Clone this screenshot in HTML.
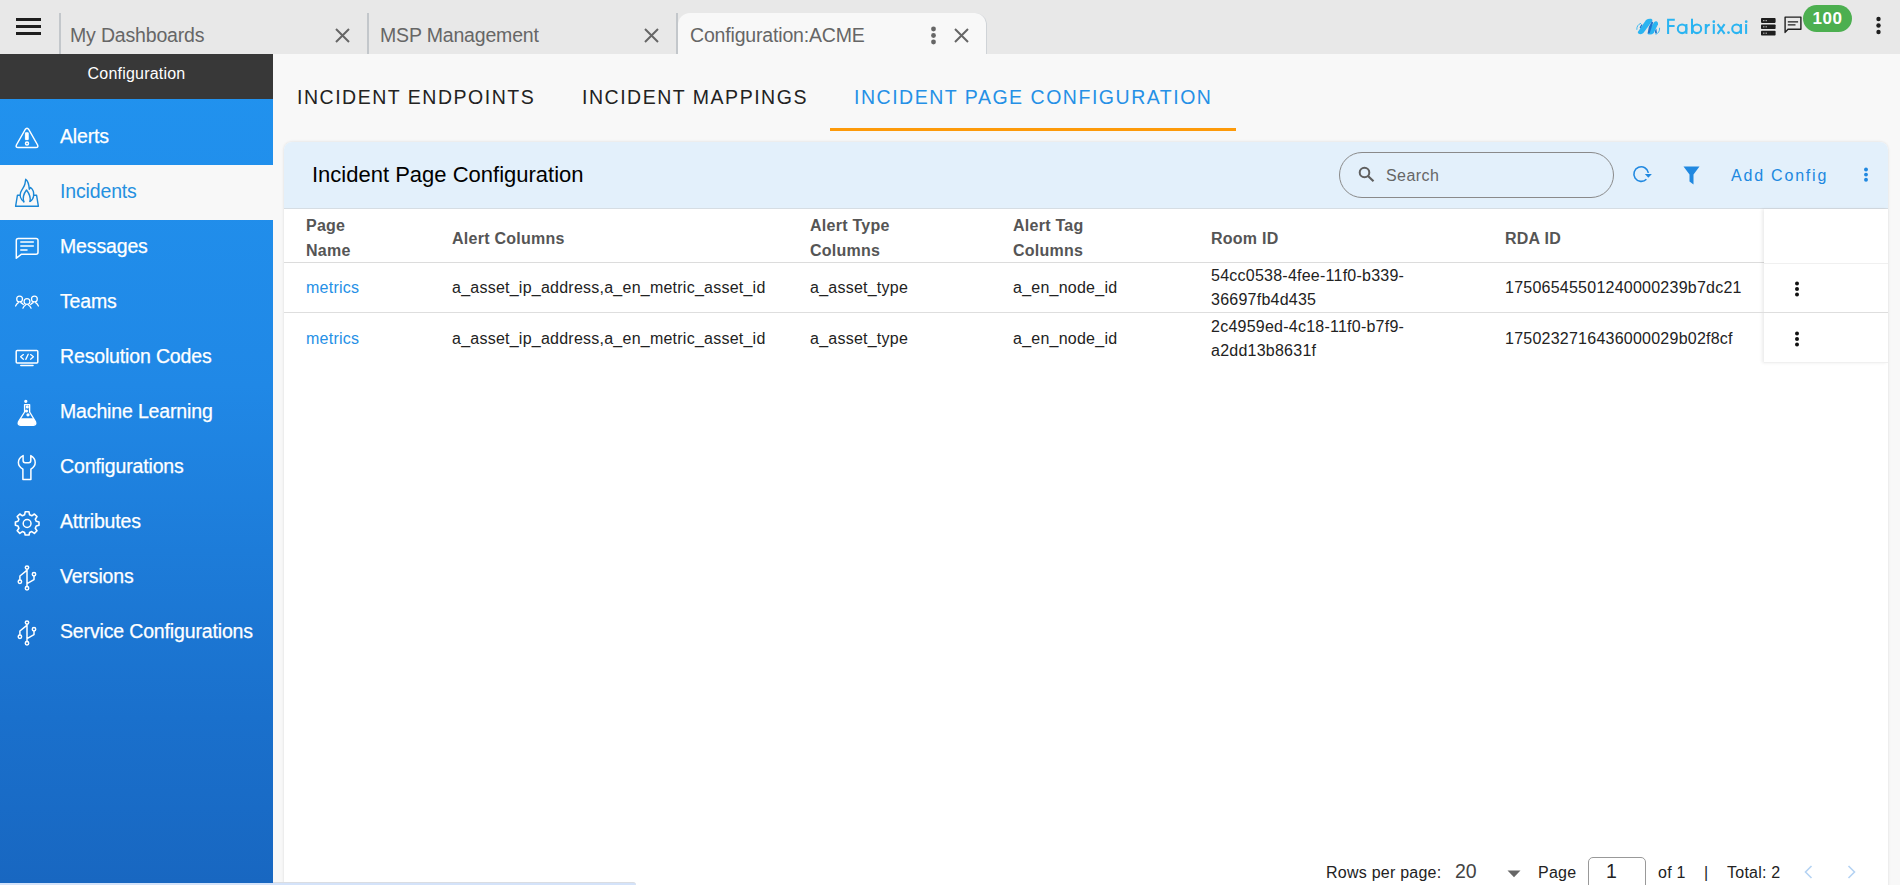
<!DOCTYPE html>
<html><head><meta charset="utf-8">
<style>
*{box-sizing:border-box}
html,body{margin:0;padding:0}
body{width:1900px;height:885px;overflow:hidden;position:relative;background:#f8f8f8;font-family:"Liberation Sans",sans-serif;color:#222}
.a{position:absolute;white-space:nowrap}
#top{position:absolute;left:0;top:0;width:1900px;height:54px;background:#e8e8e8}
.hb{position:absolute;left:16px;width:25px;height:3px;background:#1e1e1e}
.sep{position:absolute;top:13px;width:2px;height:41px;background:#c3c7cb}
.tabt{position:absolute;top:25.6px;font-size:19.5px;line-height:19.5px;color:#666;letter-spacing:-0.17px}
#side{position:absolute;left:0;top:54px;width:273px;height:829px;z-index:5;background:linear-gradient(180deg,#2193ef 0%,#2088e6 40%,#1a70cc 80%,#1867c1 100%)}
#sidehead{position:absolute;left:0;top:0;width:273px;height:45px;background:#383838;color:#fff;font-size:16px;text-align:center;line-height:16px;padding-top:12px;letter-spacing:0.2px}
.item{position:absolute;left:0;width:273px;height:55px;color:#fff;font-size:19.5px}
.item .t{position:absolute;left:60px;top:16.6px;line-height:19.5px;letter-spacing:-0.15px;-webkit-text-stroke:0.25px #fff}
.item.sel .t{-webkit-text-stroke:0}
.item svg{position:absolute;left:13px;top:12px}
.item.sel{background:#f8f8f8;color:#2590e0}
#tabs .mt{position:absolute;top:87.5px;font-size:19.5px;line-height:19.5px;letter-spacing:1.52px;color:#222}
#card{position:absolute;left:284px;top:142px;width:1604px;height:760px;background:#fff;border-radius:8px 8px 0 0;box-shadow:0 0 3px rgba(0,0,0,0.12)}
#chead{position:absolute;left:0;top:0;width:1604px;height:67px;background:#e3f0fb;border-radius:8px 8px 0 0;border-bottom:1px solid #d6dde3}
.th{position:absolute;font-size:16px;font-weight:bold;color:#555;line-height:25px;letter-spacing:0.25px}
.td{position:absolute;font-size:16px;color:#222;line-height:16px;letter-spacing:0.24px}
.lnk{color:#2590e6}
.hl{position:absolute;height:1px;background:#dedede}
</style></head>
<body>
<div id="top">
  <div class="hb" style="top:18px"></div>
  <div class="hb" style="top:25px"></div>
  <div class="hb" style="top:32px"></div>
  <div class="sep" style="left:59px"></div>
  <div class="tabt" style="left:70px">My Dashboards</div>
  <svg class="a" style="left:335px;top:28px" width="15" height="15" viewBox="0 0 15 15"><path d="M1 1L14 14M14 1L1 14" stroke="#666" stroke-width="2"/></svg>
  <div class="sep" style="left:367px"></div>
  <div class="tabt" style="left:380px">MSP Management</div>
  <svg class="a" style="left:644px;top:28px" width="15" height="15" viewBox="0 0 15 15"><path d="M1 1L14 14M14 1L1 14" stroke="#666" stroke-width="2"/></svg>
  <div class="sep" style="left:676px"></div>
  <div class="a" style="left:678px;top:13px;width:309px;height:41px;background:#f8f8f8;border-radius:12px 12px 0 0;border-right:1px solid #cfd3d7"></div>
  <div class="tabt" style="left:690px">Configuration:ACME</div>
  <svg class="a" style="left:930px;top:26px" width="7" height="19" viewBox="0 0 7 19"><circle cx="3.5" cy="3" r="2.4" fill="#666"/><circle cx="3.5" cy="9.5" r="2.4" fill="#666"/><circle cx="3.5" cy="16" r="2.4" fill="#666"/></svg>
  <svg class="a" style="left:954px;top:28px" width="15" height="15" viewBox="0 0 15 15"><path d="M1 1L14 14M14 1L1 14" stroke="#666" stroke-width="2"/></svg>
  <!-- logo -->
  <svg class="a" style="left:1630px;top:14px" width="125" height="26" viewBox="1630 14 125 26">
    <g fill="#2ab4f1">
      <path d="M1637.8 32 L1646 19.9 Q1648.2 18.4 1651.2 18.8 Q1652.6 19.4 1652.4 20.8 L1643.4 33 Q1641.8 34.6 1639.4 34 Q1637.4 33.4 1637.8 32 Z"/>
      <path d="M1647.6 33.2 L1654 22.2 Q1655.4 20.8 1657 21.4 Q1658.4 22.4 1658 24.2 L1653.8 33 Q1652 34.8 1649.6 34.6 Q1647.4 34.4 1647.6 33.2 Z"/>
    </g>
    <g fill="#1f74cc">
      <path d="M1651.8 21.2 L1653.2 22.6 L1649.8 33 L1647.6 33.4 L1648.8 27 Z"/>
      <path d="M1639.6 27.4 L1641.4 24.2 L1642.4 24.8 L1640.6 28.6 Z"/>
      <path d="M1655 30.6 L1656.4 28.6 L1657 33.2 L1655.2 33.6 Z"/>
    </g>
    <g fill="none" stroke="#2ab4f1" stroke-width="0.9" stroke-linecap="round">
      <path d="M1636.8 29.4 Q1636.6 25 1640.6 23.4"/>
      <path d="M1656 34.2 Q1659.8 33 1659.6 28.2"/>
    </g>
    <g fill="none" stroke="#2ab4f1" stroke-width="2.05">
      <path d="M1668.1 33.9 V19.75 H1674.8 M1668.1 26.05 H1674.6"/>
      <circle cx="1682.1" cy="28.8" r="4.3"/>
      <path d="M1686.4 24 V33.9"/>
      <path d="M1692 18.7 V33.9"/>
      <circle cx="1696.9" cy="28.8" r="4.3"/>
      <path d="M1705.8 24.1 V33.9 M1705.8 28.6 Q1706.6 25 1709.8 24.8"/>
      <path d="M1713.8 24.1 V33.9"/>
      <path d="M1717.6 24.1 L1724.6 33.9 M1724.6 24.1 L1717.6 33.9"/>
      <circle cx="1736.5" cy="28.8" r="4.3"/>
      <path d="M1741 24 V33.9"/>
      <path d="M1746.1 24.1 V33.9"/>
    </g>
    <g fill="#2ab4f1">
      <circle cx="1713.8" cy="21.7" r="1.35"/>
      <circle cx="1728.5" cy="32.6" r="1.35"/>
      <circle cx="1746.2" cy="21.7" r="1.35"/>
    </g>
  </svg>
  <!-- server icon -->
  <svg class="a" style="left:1755px;top:14px" width="50" height="24" viewBox="1755 14 50 24">
    <g fill="#1e1e1e">
      <rect x="1761" y="18.1" width="14.6" height="4.8" rx="0.8"/>
      <rect x="1761" y="24.4" width="14.6" height="4.7" rx="0.8"/>
      <rect x="1761" y="30.8" width="14.6" height="4.7" rx="0.8"/>
    </g>
    <g fill="#c8c8c8">
      <rect x="1763.2" y="20" width="1.2" height="1.2"/><rect x="1765.6" y="20" width="1.2" height="1.2"/>
      <rect x="1763.2" y="26.2" width="1.2" height="1.2"/><rect x="1765.6" y="26.2" width="1.2" height="1.2"/>
      <rect x="1763.2" y="32.6" width="1.2" height="1.2"/><rect x="1765.6" y="32.6" width="1.2" height="1.2"/>
    </g>
    <path d="M1785.1 17.1 H1800.9 V29.2 H1788 L1785.1 32.4 Z" fill="none" stroke="#1e1e1e" stroke-width="1.4" stroke-linejoin="round"/>
    <path d="M1787.8 21.8 H1798.1 M1787.8 24.9 H1795.5" stroke="#1e1e1e" stroke-width="1.3"/>
  </svg>
  <div class="a" style="left:1803px;top:5px;width:49px;height:27px;border-radius:14px;background:#4caf50;color:#fff;font-size:17px;line-height:27px;text-align:center;font-weight:bold;letter-spacing:0.5px">100</div>
  <svg class="a" style="left:1875px;top:16px" width="7" height="19" viewBox="0 0 7 19"><circle cx="3.5" cy="3" r="2.2" fill="#1e1e1e"/><circle cx="3.5" cy="9.5" r="2.2" fill="#1e1e1e"/><circle cx="3.5" cy="16" r="2.2" fill="#1e1e1e"/></svg>
</div>

<div id="side">
  <div id="sidehead">Configuration</div>
  <div class="item" style="top:56px"><span class="t">Alerts</span></div>
  <div class="item sel" style="top:111px"><span class="t">Incidents</span></div>
  <div class="item" style="top:166px"><span class="t">Messages</span></div>
  <div class="item" style="top:221px"><span class="t">Teams</span></div>
  <div class="item" style="top:276px"><span class="t">Resolution Codes</span></div>
  <div class="item" style="top:331px"><span class="t">Machine Learning</span></div>
  <div class="item" style="top:386px"><span class="t">Configurations</span></div>
  <div class="item" style="top:441px"><span class="t">Attributes</span></div>
  <div class="item" style="top:496px"><span class="t">Versions</span></div>
  <div class="item" style="top:551px"><span class="t">Service Configurations</span></div>
</div>


<svg class="a" style="left:0;top:0;z-index:6" width="273" height="885" viewBox="0 0 273 885" fill="none" stroke="#fff" stroke-width="1.5" stroke-linecap="round" stroke-linejoin="round">
  <!-- alerts -->
  <path d="M25.2 129.5 Q27 126.8 28.8 129.5 L37.6 145 Q38.6 147.6 36 147.6 H18 Q15.4 147.6 16.4 145 Z"/>
  <path d="M25.8 132.8 H28.2 V139.6 H25.8 Z" fill="#fff" stroke-width="1"/>
  <circle cx="27" cy="143.6" r="1.5"/>
  <!-- incidents -->
  <g stroke="#1a87d6" stroke-width="1.4">
    <path d="M19.6 195.3 H17.4 L15.6 206.3 H38.4 L36.6 195.3 H34.2"/>
    <path d="M23.8 201.8 C20.5 199.5 19.6 195.5 20.6 192.5 C21.8 189 24.3 187 24.9 184 C25.3 182 25.5 180.5 25.7 179.3 C28.2 181 29 184.5 29.3 189.3 C29.8 188.2 30.6 187.5 30.6 187.5 C33.2 189.5 34 193 33.6 196 C33.2 199 31.6 200.6 30 201.4"/>
    <path d="M23.8 201.8 C22.6 198 23.8 193.5 26.5 190 C29.2 193.5 30.8 197.5 30 201.4"/>
  </g>
  <!-- messages -->
  <path d="M18.2 238.4 H36 Q38 238.4 38 240.4 V252.2 Q38 254.2 36 254.2 H21.5 L16.3 258.2 V240.4 Q16.3 238.4 18.2 238.4 Z"/>
  <path d="M20.8 242 H33.3 M20.8 246 H33.3 M20.8 250 H27"/>
  <!-- teams -->
  <g stroke-width="1.25">
  <circle cx="19.6" cy="299" r="2.9"/>
  <circle cx="27" cy="301.5" r="2.9"/>
  <circle cx="34.4" cy="299" r="2.9"/>
  <path d="M15.6 306 Q16.6 303.6 18.4 302.6 M20.8 302.6 Q22.2 303.2 23.4 304.6"/>
  <path d="M22.9 308.2 Q23.8 306 25.6 305 M28.4 305 Q30.2 306 31.1 308.2"/>
  <path d="M30.6 304.6 Q31.8 303.2 33.2 302.6 M35.6 302.6 Q37.4 303.6 38.4 306"/>
  </g>
  <!-- resolution codes -->
  <rect x="16.2" y="350.6" width="21.6" height="12.4" rx="1"/>
  <path d="M20.8 365.6 H33"/>
  <path d="M23.4 354.6 L20.6 356.8 L23.4 359.2 M30.6 354.6 L33.4 356.8 L30.6 359.2 M28.2 354.3 L25.8 359.4" stroke-width="1.3"/>
  <!-- ML -->
  <path d="M24.6 404.6 H29.6 V412 L35.4 421.5 Q36.8 425.2 33.5 425.2 H20.6 Q17.2 425.2 18.6 421.5 L24.6 412 Z" stroke-width="1.4"/>
  <path d="M20.4 418.2 H33.6 L35.6 421.8 Q36.6 425 33.5 425 H20.6 Q17.4 425 18.4 421.8 Z" fill="#fff" stroke="none"/>
  <circle cx="25.8" cy="401.3" r="0.9" fill="#fff"/>
  <circle cx="27.3" cy="406.9" r="0.8" fill="#fff"/>
  <circle cx="26.5" cy="411" r="0.8" fill="#fff"/>
  <circle cx="28" cy="414.8" r="0.9" fill="#fff"/>
  <!-- configurations wrench -->
  <path d="M23.1 455.6 Q18.4 458 18.4 462.5 Q18.4 466.6 22.9 469.2 V479.6 H30.9 V469.2 Q35.2 466.6 35.2 462.5 Q35.2 458 30.8 455.6 V460.6 Q30.8 462.8 28.8 462.8 H25.1 Q23.1 462.8 23.1 460.6 Z"/>
  <!-- attributes gear -->
  <path d="M25.2 511.8 H29 L29.6 514.8 L31.8 515.8 L34.4 514 L37 516.6 L35.3 519.2 L36.2 521.3 L39 522 V525.3 L36.2 526 L35.3 528.2 L37 530.8 L34.4 533.4 L31.8 531.6 L29.6 532.6 L29 535 H25.2 L24.6 532.6 L22.4 531.6 L19.8 533.4 L17.2 530.8 L18.9 528.2 L18 526 L15.4 525.3 V522 L18 521.3 L18.9 519.2 L17.2 516.6 L19.8 514 L22.4 515.8 L24.6 514.8 Z" stroke-width="1.6"/>
  <circle cx="27.1" cy="523.5" r="3.9"/>
  <!-- versions -->
  <g id="ver">
  <circle cx="27" cy="567.6" r="1.7"/>
  <circle cx="27" cy="588.2" r="1.7"/>
  <circle cx="19.9" cy="581.8" r="1.7"/>
  <circle cx="34" cy="574.2" r="1.7"/>
  <path d="M27 569.3 V586.5 M26.2 570.8 L19.9 576 V580.1 M27 583.6 L34 579.6 V575.9"/>
  </g>
  <use href="#ver" y="55"/>
</svg>

<div id="tabs">
  <div class="mt" style="left:297px">INCIDENT ENDPOINTS</div>
  <div class="mt" style="left:582px">INCIDENT MAPPINGS</div>
  <div class="mt" style="left:854px;color:#2590e6">INCIDENT PAGE CONFIGURATION</div>
  <div class="a" style="left:830px;top:128px;width:406px;height:3px;background:#fd9a0a"></div>
</div>

<div id="card">
  <div id="chead">
    <div class="a" style="left:28px;top:22px;font-size:22px;line-height:22px;color:#000">Incident Page Configuration</div>
    <div class="a" style="left:1055px;top:10px;width:275px;height:46px;border:1px solid #8a8a8a;border-radius:23px"></div>
    <svg class="a" style="left:1074px;top:24px" width="17" height="16" viewBox="0 0 17 16"><circle cx="6.5" cy="6.5" r="4.8" fill="none" stroke="#5f5f5f" stroke-width="2"/><path d="M10 10L15.5 15.2" stroke="#5f5f5f" stroke-width="2.2"/></svg>
    <div class="a" style="left:1102px;top:26px;font-size:16px;line-height:16px;color:#666;letter-spacing:0.45px">Search</div>
    <svg class="a" style="left:1340px;top:22px" width="30" height="24" viewBox="1624 164 30 24"><path d="M1646.4 179.2 A7.3 7.3 0 1 1 1648.4 172.9" fill="none" stroke="#2088e0" stroke-width="1.6"/><path d="M1644.8 174.1 H1651.9 L1648.3 177.7 Z" fill="#2088e0"/></svg>
    <svg class="a" style="left:1399px;top:24px" width="17" height="19" viewBox="0 0 17 19"><path d="M0.5 0.5H16.5L10.5 8.5V18.5L6.5 15.5V8.5Z" fill="#2088e0"/></svg>
    <div class="a" style="left:1447px;top:26px;font-size:16px;line-height:16px;color:#2088e0;letter-spacing:1.8px">Add Config</div>
    <svg class="a" style="left:1579px;top:25px" width="6" height="16" viewBox="0 0 6 16"><circle cx="3" cy="2.5" r="1.95" fill="#2088e0"/><circle cx="3" cy="7.6" r="1.95" fill="#2088e0"/><circle cx="3" cy="12.7" r="1.95" fill="#2088e0"/></svg>
  </div>
  <!-- table -->
  <div class="th" style="left:22px;top:71px">Page<br>Name</div>
  <div class="th" style="left:168px;top:84px">Alert Columns</div>
  <div class="th" style="left:526px;top:71px">Alert Type<br>Columns</div>
  <div class="th" style="left:729px;top:71px">Alert Tag<br>Columns</div>
  <div class="th" style="left:927px;top:84px">Room ID</div>
  <div class="th" style="left:1221px;top:84px">RDA ID</div>
  <div class="hl" style="left:0;top:120px;width:1480px;background:#dcdcdc"></div>
  <div class="a" style="left:1480px;top:67px;width:124px;height:154px;box-shadow:-2px 0 3px rgba(0,0,0,0.08);background:#fff"></div>
  <div class="hl" style="left:1480px;top:121px;width:124px;background:#f0f0f0"></div>
  <div class="hl" style="left:0;top:170px;width:1604px"></div>
  <div class="hl" style="left:1480px;top:220px;width:124px;background:#f0f0f0"></div>

  <div class="td lnk" style="left:22px;top:138px">metrics</div>
  <div class="td" style="left:168px;top:138px">a_asset_ip_address,a_en_metric_asset_id</div>
  <div class="td" style="left:526px;top:138px">a_asset_type</div>
  <div class="td" style="left:729px;top:138px">a_en_node_id</div>
  <div class="td" style="left:927px;top:122px;line-height:24px;white-space:normal">54cc0538-4fee-11f0-b339-<br>36697fb4d435</div>
  <div class="td" style="left:1221px;top:138px">17506545501240000239b7dc21</div>
  <svg class="a" style="left:1510px;top:139px" width="6" height="16" viewBox="0 0 6 16"><circle cx="3" cy="2.5" r="2" fill="#111"/><circle cx="3" cy="8" r="2" fill="#111"/><circle cx="3" cy="13.5" r="2" fill="#111"/></svg>

  <div class="td lnk" style="left:22px;top:189px">metrics</div>
  <div class="td" style="left:168px;top:189px">a_asset_ip_address,a_en_metric_asset_id</div>
  <div class="td" style="left:526px;top:189px">a_asset_type</div>
  <div class="td" style="left:729px;top:189px">a_en_node_id</div>
  <div class="td" style="left:927px;top:172.6px;line-height:24px;white-space:normal">2c4959ed-4c18-11f0-b7f9-<br>a2dd13b8631f</div>
  <div class="td" style="left:1221px;top:189px">1750232716436000029b02f8cf</div>
  <svg class="a" style="left:1510px;top:189px" width="6" height="16" viewBox="0 0 6 16"><circle cx="3" cy="2.5" r="2" fill="#111"/><circle cx="3" cy="8" r="2" fill="#111"/><circle cx="3" cy="13.5" r="2" fill="#111"/></svg>

  <!-- pagination -->
  <div class="a" style="left:1042px;top:723px;font-size:16px;line-height:16px;color:#222;letter-spacing:0.24px">Rows per page:</div>
  <div class="a" style="left:1171px;top:719.6px;font-size:19.5px;line-height:19.5px;color:#444">20</div>
  <svg class="a" style="left:1223px;top:728px" width="14" height="8" viewBox="0 0 14 8"><path d="M0.5 0.5H13.5L7 7.2Z" fill="#666"/></svg>
  <div class="a" style="left:1254px;top:723px;font-size:16px;line-height:16px;color:#222;letter-spacing:0.24px">Page</div>
  <div class="a" style="left:1304px;top:715px;width:58px;height:40px;border:1px solid #999;border-radius:5px"></div>
  <div class="a" style="left:1322px;top:719.6px;font-size:19.5px;line-height:19.5px;color:#222">1</div>
  <div class="a" style="left:1374px;top:723px;font-size:16px;line-height:16px;color:#222;letter-spacing:0.24px">of 1</div>
  <div class="a" style="left:1420px;top:723px;font-size:16px;line-height:16px;color:#222;letter-spacing:0.24px">|</div>
  <div class="a" style="left:1443px;top:723px;font-size:16px;line-height:16px;color:#222;letter-spacing:0.24px">Total: 2</div>
  <svg class="a" style="left:1520px;top:723px" width="9" height="14" viewBox="0 0 9 14"><path d="M7.5 1L1.5 7L7.5 13" fill="none" stroke="#b5d3f3" stroke-width="1.6"/></svg>
  <svg class="a" style="left:1563px;top:723px" width="9" height="14" viewBox="0 0 9 14"><path d="M1.5 1L7.5 7L1.5 13" fill="none" stroke="#b5d3f3" stroke-width="1.6"/></svg>
</div>

<div class="a" style="left:0;top:882px;width:636px;height:3px;background:#d4e3fa;border-top:1px solid #dadde2;border-radius:0 3px 0 0"></div>
</body></html>
